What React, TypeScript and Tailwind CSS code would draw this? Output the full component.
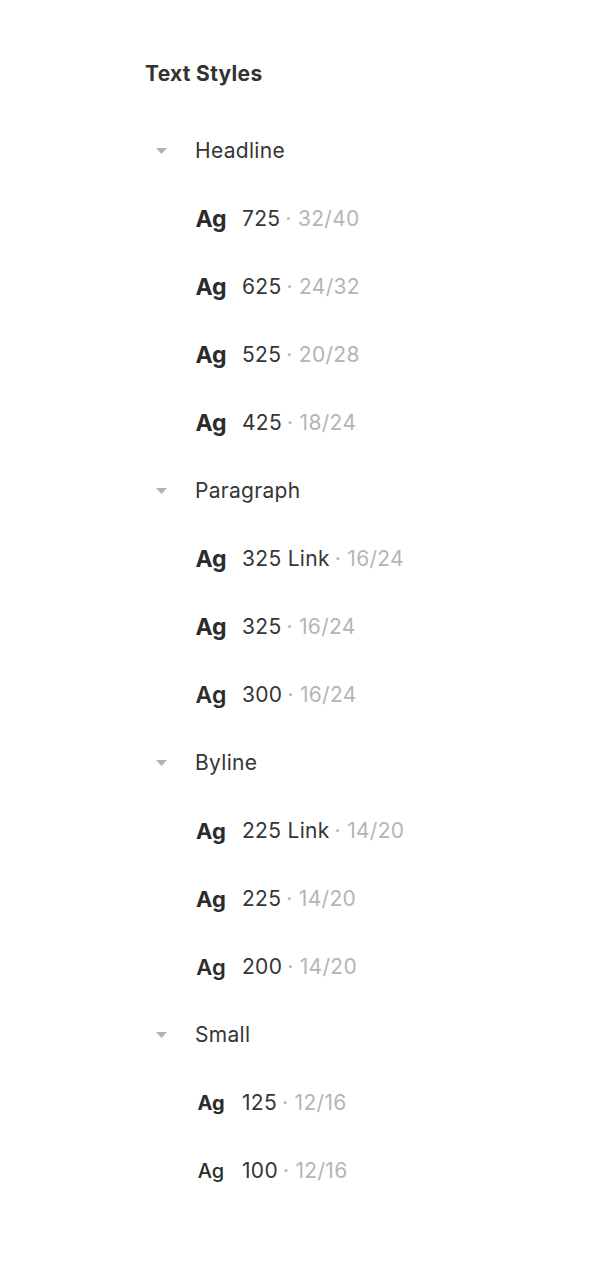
import React from 'react';

type Style = { ag: string; name: string; size: string };
type Group = { title: string; items: Style[] };

const groups: Group[] = [
  {
    title: 'Headline',
    items: [
      { ag: 'text-[23px] font-bold', name: '725', size: '32/40' },
      { ag: 'text-[23px] font-bold', name: '625', size: '24/32' },
      { ag: 'text-[23px] font-bold', name: '525', size: '20/28' },
      { ag: 'text-[23px] font-bold', name: '425', size: '18/24' },
    ],
  },
  {
    title: 'Paragraph',
    items: [
      { ag: 'text-[23px] font-bold', name: '325 Link', size: '16/24' },
      { ag: 'text-[23px] font-bold', name: '325', size: '16/24' },
      { ag: 'text-[23px] font-semibold', name: '300', size: '16/24' },
    ],
  },
  {
    title: 'Byline',
    items: [
      { ag: 'text-[22px] font-bold', name: '225 Link', size: '14/20' },
      { ag: 'text-[22px] font-bold', name: '225', size: '14/20' },
      { ag: 'text-[22px] font-semibold', name: '200', size: '14/20' },
    ],
  },
  {
    title: 'Small',
    items: [
      { ag: 'text-[20px] font-bold', name: '125', size: '12/16' },
      { ag: 'text-[20px] font-medium', name: '100', size: '12/16' },
    ],
  },
];

export default function App() {
  return (
    <div
      className="w-full min-h-screen bg-white pl-[145px] pt-[54px] text-[#363636] tracking-[0.3px]"
      style={{ fontFamily: 'Inter, "Noto Sans", sans-serif' }}
    >
      {/* 제목 */}
      <div className="h-[40px] flex items-center text-[21px] font-bold text-[#333]">Text Styles</div>

      <div className="mt-[23px]">
        {groups.map((g) => (
          <div key={g.title}>
            <div className="h-[68px] flex items-center">
              <svg width="11" height="6" viewBox="0 0 11 6" className="ml-[11px] mr-[28px]">
                <path d="M0 0 H11 L5.5 6 Z" fill="#b3b3b3" />
              </svg>
              <span className="text-[21px]">{g.title}</span>
            </div>
            {g.items.map((it, i) => (
              <div key={i} className="h-[68px] flex items-center pl-[49px]">
                <span className={`w-[34px] text-center text-[#2b2b2b] tracking-normal ${it.ag}`}>Ag</span>
                <span className="ml-[14px] text-[21px] text-[#363636]">{it.name}</span>
                <span className="ml-[5px] text-[21px] text-[#b5b5b5]">· {it.size}</span>
              </div>
            ))}
          </div>
        ))}
      </div>
    </div>
  );
}
